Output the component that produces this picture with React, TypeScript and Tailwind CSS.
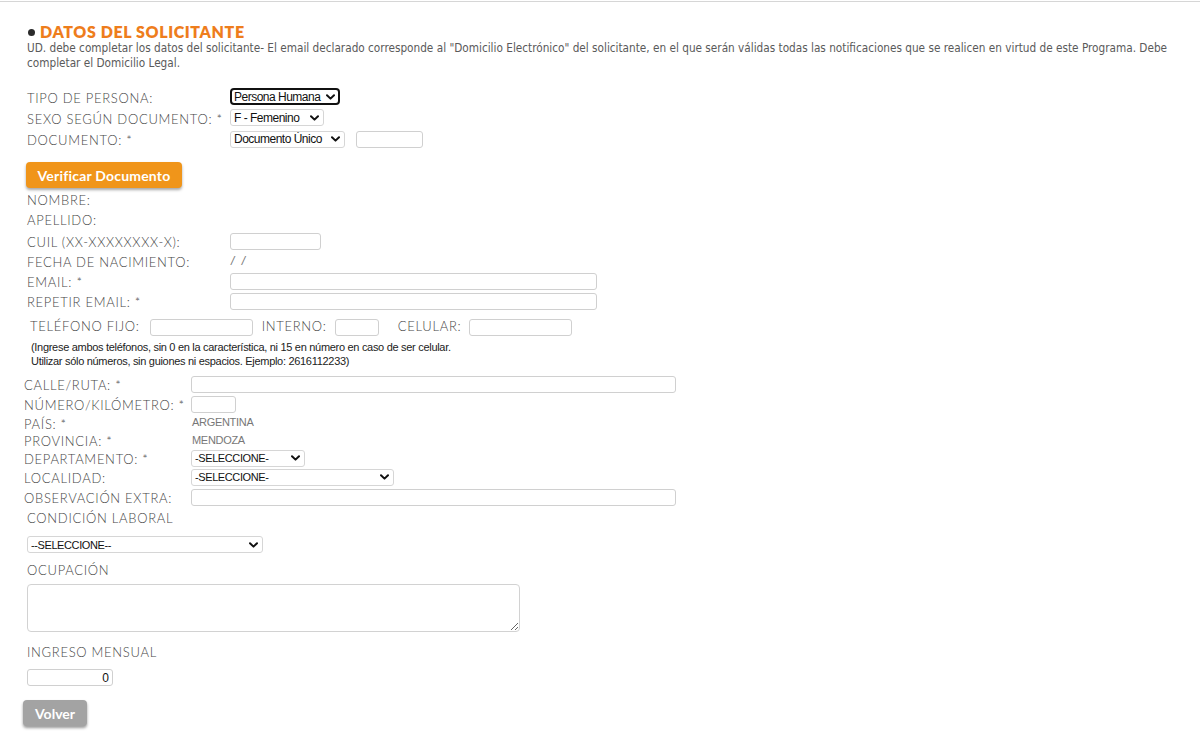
import type { ReactNode } from 'react'

const lato = "font-['Lato','Open_Sans',sans-serif]"
const arial = "font-['Liberation_Sans','Arial',sans-serif]"

function Label({ children, className = '' }: { children: ReactNode; className?: string }) {
  return (
    <span className={`${lato} text-[13px] font-light tracking-[0.7px] text-[#474747] whitespace-nowrap ${className}`}>
      {children}
    </span>
  )
}

function Chevron() {
  return (
    <svg width="9" height="6" viewBox="0 0 9 6" className="pointer-events-none absolute right-[5px] top-1/2 -translate-y-1/2">
      <path d="M1 1.2 L4.5 4.6 L8 1.2" fill="none" stroke="#111" strokeWidth="2" strokeLinecap="round" strokeLinejoin="round" />
    </svg>
  )
}

function Select({
  value,
  width,
  focused = false,
  caps = false,
}: {
  value: string
  width: string
  focused?: boolean
  caps?: boolean
}) {
  return (
    <div className={`relative h-[17px] shrink-0 ${width}`}>
      <select
        defaultValue={value}
        className={`block h-full w-full appearance-none bg-white pr-4 leading-[14px] text-[#111] outline-none ${arial} ${
          caps ? 'text-[11px] tracking-[-0.4px]' : 'text-[12px] tracking-[-0.5px]'
        } ${focused ? 'rounded-[4px] border-2 border-[#111] pl-[2px]' : 'rounded-[3px] border border-[#d6d6d6] pl-[3px]'}`}
      >
        <option>{value}</option>
      </select>
      <Chevron />
    </div>
  )
}

function Field({ width, value = '', right = false }: { width: string; value?: string; right?: boolean }) {
  return (
    <input
      defaultValue={value}
      className={`block h-[17px] shrink-0 ${width} rounded-[3px] border border-[#d0d0d0] bg-white px-[3px] text-[12px] text-[#111] outline-none ${arial} ${
        right ? 'text-right' : ''
      }`}
    />
  )
}

function Row({ h, children, className = '' }: { h: string; children: ReactNode; className?: string }) {
  return <div className={`flex items-center ${h} ${className}`}>{children}</div>
}

export default function App() {
  return (
    <div className="min-h-[740px] bg-white">
      <div className="mt-px h-px bg-[#d6d6d6]" />

      {/* header */}
      <div className="pl-[28px] pt-[21px]">
        <div className="flex h-[18px] items-center">
          <span className="mr-[5px] h-[7px] w-[7px] rounded-full bg-[#2b2b2b]" />
          <h1 className={`${lato} text-[16px] font-extrabold leading-[18px] tracking-[0.6px] text-[#ee7d1c]`}>
            DATOS DEL SOLICITANTE
          </h1>
        </div>
        <p className="-ml-px font-['DejaVu_Sans_Condensed','DejaVu_Sans',sans-serif] text-[11.7px] leading-[15px] text-[#5a5a5a] whitespace-nowrap">
          UD. debe completar los datos del solicitante- El email declarado corresponde al "Domicilio Electrónico" del
          solicitante, en el que serán válidas todas las notificaciones que se realicen en virtud de este Programa. Debe
          <br />
          completar el Domicilio Legal.
        </p>
      </div>

      {/* persona */}
      <div className="mt-[15px] pl-[27px]">
        <Row h="h-[21px]">
          <div className="w-[203px]">
            <Label>TIPO DE PERSONA:</Label>
          </div>
          <Select value="Persona Humana" width="w-[110px]" focused />
        </Row>
        <Row h="h-[21px]">
          <div className="w-[203px]">
            <Label>SEXO SEGÚN DOCUMENTO: *</Label>
          </div>
          <Select value="F - Femenino" width="w-[94px]" />
        </Row>
        <Row h="h-[22px]">
          <div className="w-[203px]">
            <Label>DOCUMENTO: *</Label>
          </div>
          <Select value="Documento Único" width="w-[115px]" />
          <div className="w-[11px]" />
          <Field width="w-[67px]" />
        </Row>

        <button
          className={`mt-[12px] -ml-px block h-[26px] w-[156px] rounded-[4px] bg-[#f0951a] ${lato} text-[14px] font-bold tracking-[0.2px] text-white shadow-[0_2px_3px_rgba(0,0,0,0.35)]`}
        >
          Verificar Documento
        </button>

        <div className="mt-[3px]">
          <Row h="h-[20px]">
            <Label>NOMBRE:</Label>
          </Row>
          <Row h="h-[20px]">
            <Label>APELLIDO:</Label>
          </Row>
          <Row h="h-[20px]">
            <div className="w-[203px]">
              <Label>CUIL (XX-XXXXXXXX-X):</Label>
            </div>
            <Field width="w-[91px]" />
          </Row>
          <Row h="h-[20px]">
            <div className="w-[204px]">
              <Label>FECHA DE NACIMIENTO:</Label>
            </div>
            <span className={`${arial} text-[12px] italic tracking-[2px] text-[#777]`}>/&nbsp;/</span>
          </Row>
          <Row h="h-[20px]">
            <div className="w-[203px]">
              <Label>EMAIL: *</Label>
            </div>
            <Field width="w-[367px]" />
          </Row>
          <Row h="h-[20px]">
            <div className="w-[203px]">
              <Label>REPETIR EMAIL: *</Label>
            </div>
            <Field width="w-[367px]" />
          </Row>
        </div>
      </div>

      {/* telefonos */}
      <div className="mt-[6px] pl-[30px]">
        <Row h="h-[20px]">
          <Label className="mr-[10px]">TELÉFONO FIJO:</Label>
          <Field width="w-[103px]" />
          <Label className="ml-[9px] mr-[8px]">INTERNO:</Label>
          <Field width="w-[44px]" />
          <Label className="ml-[19px] mr-[8px]">CELULAR:</Label>
          <Field width="w-[103px]" />
        </Row>
        <p className={`${arial} mt-[3px] pl-px text-[11px] leading-[14px] tracking-[-0.3px] text-[#222]`}>
          (Ingrese ambos teléfonos, sin 0 en la característica, ni 15 en número en caso de ser celular.
          <br />
          Utilizar sólo números, sin guiones ni espacios. Ejemplo: 2616112233)
        </p>
      </div>

      {/* domicilio */}
      <div className="mt-[6px] pl-[24px]">
        <Row h="h-[20px]">
          <div className="w-[167px]">
            <Label>CALLE/RUTA: *</Label>
          </div>
          <Field width="w-[485px]" />
        </Row>
        <Row h="h-[20px]">
          <div className="w-[167px]">
            <Label>NÚMERO/KILÓMETRO: *</Label>
          </div>
          <Field width="w-[45px]" />
        </Row>
        <Row h="h-[17px]">
          <div className="w-[168px]">
            <Label>PAÍS: *</Label>
          </div>
          <span className={`${arial} text-[11px] tracking-[-0.3px] text-[#777]`}>ARGENTINA</span>
        </Row>
        <Row h="h-[18px]">
          <div className="w-[168px]">
            <Label>PROVINCIA: *</Label>
          </div>
          <span className={`${arial} text-[11px] tracking-[-0.3px] text-[#777]`}>MENDOZA</span>
        </Row>
        <Row h="h-[18px]">
          <div className="w-[167px]">
            <Label>DEPARTAMENTO: *</Label>
          </div>
          <Select value="-SELECCIONE-" width="w-[114px]" caps />
        </Row>
        <Row h="h-[20px]">
          <div className="w-[167px]">
            <Label>LOCALIDAD:</Label>
          </div>
          <Select value="-SELECCIONE-" width="w-[203px]" caps />
        </Row>
        <Row h="h-[20px]">
          <div className="w-[167px]">
            <Label>OBSERVACIÓN EXTRA:</Label>
          </div>
          <Field width="w-[485px]" />
        </Row>
      </div>

      {/* laboral */}
      <div className="mt-[3px] pl-[27px]">
        <Row h="h-[18px]">
          <Label>CONDICIÓN LABORAL</Label>
        </Row>
        <div className="mt-[8px]">
          <Select value="--SELECCIONE--" width="w-[236px]" caps />
        </div>
        <Row h="h-[18px]" className="mt-[9px]">
          <Label>OCUPACIÓN</Label>
        </Row>
        <textarea className="mt-[4px] block h-[48px] w-[493px] rounded-[4px] border border-[#d2d2d2] bg-white outline-none" />
        <Row h="h-[18px]" className="mt-[12px]">
          <Label>INGRESO MENSUAL</Label>
        </Row>
        <div className="mt-[7px]">
          <Field width="w-[86px]" value="0" right />
        </div>
        <button
          className={`mt-[14px] -ml-[4px] block h-[26px] w-[64px] rounded-[4px] bg-[#a3a3a3] ${lato} text-[14px] font-bold text-white shadow-[0_2px_3px_rgba(0,0,0,0.4)]`}
        >
          Volver
        </button>
      </div>
    </div>
  )
}
